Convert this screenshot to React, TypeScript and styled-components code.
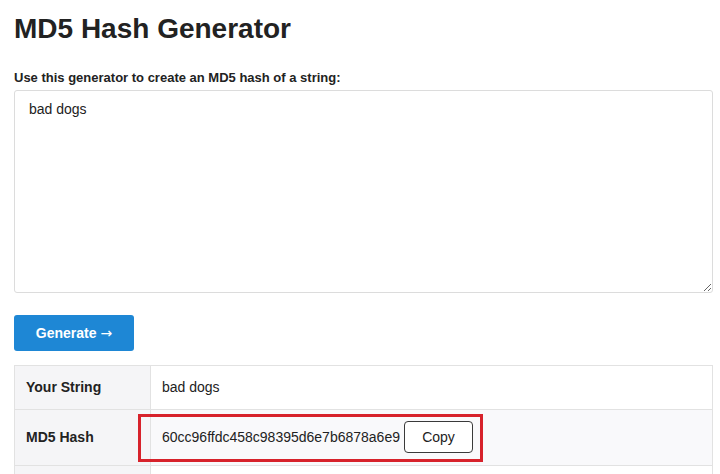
import React, { useState } from 'react';
import styled, { createGlobalStyle } from 'styled-components';

const GlobalStyle = createGlobalStyle`
  body {
    margin: 0;
    background: #ffffff;
    font-family: 'Liberation Sans', Arial, sans-serif;
    color: #222222;
  }
`;

const Page = styled.div`
  width: 699px;
  padding: 12px 0 0 14px;
`;

const Title = styled.h1`
  margin: 0;
  font-size: 28px;
  line-height: 34px;
  font-weight: 700;
  color: #222222;
`;

const Form = styled.form`
  margin-top: 23px;
  display: flex;
  flex-direction: column;
  align-items: flex-start;
`;

const Label = styled.label`
  font-size: 13px;
  line-height: 18px;
  font-weight: 700;
  margin-bottom: 3px;
`;

const TextArea = styled.textarea`
  box-sizing: border-box;
  width: 100%;
  height: 203px;
  padding: 10px 14px;
  border: 1px solid #dcdcdc;
  border-radius: 3px;
  font-family: 'Liberation Sans', Arial, sans-serif;
  font-size: 14px;
  color: #222222;
  outline: none;
`;

const GenerateButton = styled.button`
  margin-top: 22px;
  width: 120px;
  height: 36px;
  border: none;
  border-radius: 3px;
  background: #1e87d5;
  color: #ffffff;
  font-family: 'Liberation Sans', Arial, sans-serif;
  font-size: 14px;
  font-weight: 700;
  cursor: pointer;
`;

const Arrow = styled.span`
  font-family: 'DejaVu Sans', sans-serif;
  font-weight: 400;
  font-size: 14px;
`;

const Table = styled.table`
  margin-top: 14px;
  width: 100%;
  border-collapse: collapse;
  border: 1px solid #e2e2e2;
  font-size: 14px;
  line-height: 20px;
`;

const Row = styled.tr<{ $shaded?: boolean }>`
  border-bottom: 1px solid #e2e2e2;
  background: ${(p) => (p.$shaded ? '#f9f9fb' : '#ffffff')};
`;

const Head = styled.th`
  width: 112px;
  height: 20px;
  padding: 11px 12px 12px 11px;
  text-align: left;
  font-weight: 700;
  background: #f5f5f7;
  border-right: 1px solid #e2e2e2;
`;

const Cell = styled.td`
  padding: 11px 12px 12px 11px;
`;

const HashBox = styled.div`
  position: relative;
  display: inline-flex;
  align-items: center;
  gap: 4px;

  &::after {
    content: '';
    position: absolute;
    inset: -7px -10px -9px -24px;
    border: 3px solid #d7222b;
    pointer-events: none;
  }
`;

const CopyButton = styled.button`
  width: 69px;
  height: 32px;
  border: 1px solid #3a3a3a;
  border-radius: 4px;
  background: #ffffff;
  color: #222222;
  font-family: 'Liberation Sans', Arial, sans-serif;
  font-size: 14px;
  cursor: pointer;
`;

const App: React.FC = () => {
  const [text, setText] = useState<string>('bad dogs');
  const hash = '60cc96ffdc458c98395d6e7b6878a6e9';

  return (
    <>
      <GlobalStyle />
      <Page>
        <Title>MD5 Hash Generator</Title>
        <Form onSubmit={(e) => e.preventDefault()}>
          <Label htmlFor="input">Use this generator to create an MD5 hash of a string:</Label>
          <TextArea id="input" value={text} onChange={(e) => setText(e.target.value)} />
          <GenerateButton type="submit">
            Generate <Arrow>→</Arrow>
          </GenerateButton>
        </Form>
        <Table>
          <tbody>
            <Row>
              <Head>Your String</Head>
              <Cell>bad dogs</Cell>
            </Row>
            <Row $shaded>
              <Head>MD5 Hash</Head>
              <Cell>
                <HashBox>
                  <span>{hash}</span>
                  <CopyButton type="button">Copy</CopyButton>
                </HashBox>
              </Cell>
            </Row>
            <Row>
              <Head />
              <Cell />
            </Row>
          </tbody>
        </Table>
      </Page>
    </>
  );
};

export default App;
